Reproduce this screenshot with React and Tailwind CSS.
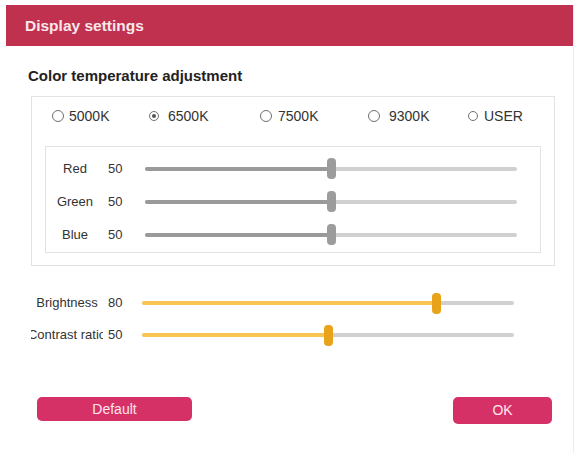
import { useState } from "react";

const TRACK_W = 372;
const THUMB_W = 9;

function Slider({ value, color }) {
  const yellow = color === "yellow";
  const pos = (value / 100) * (TRACK_W - THUMB_W);
  return (
    <div className="relative h-[21px] w-[372px] flex items-center">
      <div className="h-[4px] w-full rounded-full bg-[#d0d0d0]" />
      <div
        className={`absolute left-0 h-[4px] rounded-full ${yellow ? "bg-[#f8c553]" : "bg-[#9a9a9a]"}`}
        style={{ width: pos + THUMB_W / 2 }}
      />
      <div
        className={`absolute top-0 h-[21px] w-[9px] rounded-[4px] ${yellow ? "bg-[#e9a31b]" : "bg-[#9c9c9c]"}`}
        style={{ left: pos }}
      />
    </div>
  );
}

function Radio({ size, checked }) {
  return (
    <span
      className={`flex shrink-0 items-center justify-center rounded-full border border-[#6f6f6f] bg-white ${size === 10 ? "h-[10px] w-[10px]" : "h-[12px] w-[12px]"}`}
    >
      {checked && <span className="h-[4px] w-[4px] rounded-full bg-[#555]" />}
    </span>
  );
}

export default function App() {
  const [temp, setTemp] = useState("6500K");
  const rgb = [
    { name: "Red", value: 50 },
    { name: "Green", value: 50 },
    { name: "Blue", value: 50 },
  ];

  return (
    <div
      className="h-[453px] w-[581px] overflow-hidden bg-white pt-[5px] text-[#333]"
      style={{ fontFamily: '"Liberation Sans", Arial, sans-serif' }}
    >
      <div className="ml-[6px] flex h-[448px] w-[568px] flex-col border-r border-[#ececec]">
        <div className="flex h-[41px] items-center bg-[#c0304f] pl-[19px] text-[15.5px] font-bold text-[#f7e8ec]">
          Display settings
        </div>

        <div className="mt-[21px] pl-[22px] text-[15px] font-bold leading-[18px] text-[#222]">
          Color temperature adjustment
        </div>

        <div className="ml-[25px] mt-[11px] h-[170px] w-[524px] border border-[#e3e3e3]">
          <div className="mt-[9px] flex h-[20px] items-center pl-[20px] text-[14px] text-[#333]">
            <button className="flex w-[97px] items-center" onClick={() => setTemp("5000K")}>
              <Radio size={12} checked={temp === "5000K"} />
              <span className="ml-[5px]">5000K</span>
            </button>
            <button className="flex w-[111px] items-center" onClick={() => setTemp("6500K")}>
              <Radio size={10} checked={temp === "6500K"} />
              <span className="ml-[9px]">6500K</span>
            </button>
            <button className="flex w-[108px] items-center" onClick={() => setTemp("7500K")}>
              <Radio size={12} checked={temp === "7500K"} />
              <span className="ml-[6px]">7500K</span>
            </button>
            <button className="flex w-[100px] items-center" onClick={() => setTemp("9300K")}>
              <Radio size={12} checked={temp === "9300K"} />
              <span className="ml-[9px]">9300K</span>
            </button>
            <button className="flex items-center" onClick={() => setTemp("USER")}>
              <Radio size={10} checked={temp === "USER"} />
              <span className="ml-[6px]">USER</span>
            </button>
          </div>

          <div className="ml-[13px] mt-[20px] h-[107px] w-[496px] border border-[#e3e3e3] pt-[5px]">
            {rgb.map((c) => (
              <div key={c.name} className="flex h-[33px] items-center text-[13px] text-[#333]">
                <div className="ml-[4px] w-[50px] text-center">{c.name}</div>
                <div className="ml-[8px] w-[37px]">{c.value}</div>
                <Slider value={c.value} color="gray" />
              </div>
            ))}
          </div>
        </div>

        <div className="mt-[21px] text-[13px] text-[#333]">
          <div className="flex h-[32px] items-center">
            <div className="ml-[25px] flex w-[72px] justify-center overflow-hidden whitespace-nowrap">
              <span>Brightness</span>
            </div>
            <div className="ml-[5px] w-[34px]">80</div>
            <Slider value={80} color="yellow" />
          </div>
          <div className="flex h-[32px] items-center">
            <div className="ml-[25px] flex w-[72px] justify-center overflow-hidden whitespace-nowrap">
              <span className="shrink-0">Contrast ratio</span>
            </div>
            <div className="ml-[5px] w-[34px]">50</div>
            <Slider value={50} color="yellow" />
          </div>
        </div>

        <div className="mt-[46px] flex items-start">
          <button className="ml-[31px] h-[24px] w-[155px] rounded-[5px] bg-[#d63166] text-[14px] text-[#fde6ee]">
            Default
          </button>
          <button className="ml-[261px] h-[27px] w-[99px] rounded-[5px] bg-[#d63166] text-[14px] text-[#fde6ee]">
            OK
          </button>
        </div>
      </div>
    </div>
  );
}
